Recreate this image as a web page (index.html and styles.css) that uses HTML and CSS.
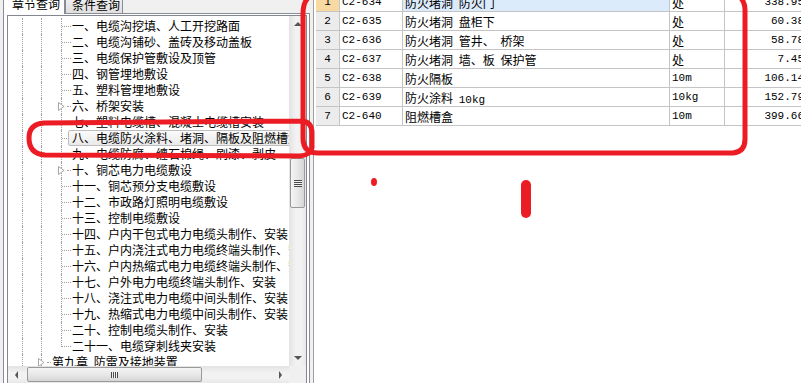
FILE: index.html
```html
<!DOCTYPE html>
<html lang="zh-CN">
<head>
    <meta charset="UTF-8">
    <title>章节查询</title>
    <link rel="stylesheet" href="styles.css">
</head>
<body>
    <div class="app">
        <div class="left">
            <div class="tabs">
                <div class="tab on">章节查询</div>
                <div class="tab">条件查询</div>
            </div>
            <div class="page">
                <div class="tree">
                    <div class="nodes">
                        <div class="row"><i class="g"></i><i class="g"></i><i class="c"></i><span class="t">一、电缆沟挖填、人工开挖路面</span></div>
                        <div class="row"><i class="g"></i><i class="g"></i><i class="c"></i><span class="t">二、电缆沟铺砂、盖砖及移动盖板</span></div>
                        <div class="row"><i class="g"></i><i class="g"></i><i class="c"></i><span class="t">三、电缆保护管敷设及顶管</span></div>
                        <div class="row"><i class="g"></i><i class="g"></i><i class="c"></i><span class="t">四、钢管埋地敷设</span></div>
                        <div class="row"><i class="g"></i><i class="g"></i><i class="c"></i><span class="t">五、塑料管埋地敷设</span></div>
                        <div class="row"><i class="g"></i><i class="g"></i><i class="c exp"><svg width="7" height="9" viewBox="0 0 7 9"><polygon points="0.5,0.5 6,4.5 0.5,8.5" fill="#fff" stroke="#a6a6a6"/></svg></i><span class="t">六、桥架安装</span></div>
                        <div class="row"><i class="g"></i><i class="g"></i><i class="c"></i><span class="t">七、塑料电缆槽、混凝土电缆槽安装</span></div>
                        <div class="row sel"><i class="g"></i><i class="g"></i><i class="c"></i><span class="t">八、电缆防火涂料、堵洞、隔板及阻燃槽盒安装</span></div>
                        <div class="row"><i class="g"></i><i class="g"></i><i class="c"></i><span class="t">九、电缆防腐、缠石棉绳、刷漆、剥皮</span></div>
                        <div class="row"><i class="g"></i><i class="g"></i><i class="c exp"><svg width="7" height="9" viewBox="0 0 7 9"><polygon points="0.5,0.5 6,4.5 0.5,8.5" fill="#fff" stroke="#a6a6a6"/></svg></i><span class="t">十、铜芯电力电缆敷设</span></div>
                        <div class="row"><i class="g"></i><i class="g"></i><i class="c"></i><span class="t">十一、铜芯预分支电缆敷设</span></div>
                        <div class="row"><i class="g"></i><i class="g"></i><i class="c"></i><span class="t">十二、市政路灯照明电缆敷设</span></div>
                        <div class="row"><i class="g"></i><i class="g"></i><i class="c"></i><span class="t">十三、控制电缆敷设</span></div>
                        <div class="row"><i class="g"></i><i class="g"></i><i class="c"></i><span class="t">十四、户内干包式电力电缆头制作、安装</span></div>
                        <div class="row"><i class="g"></i><i class="g"></i><i class="c"></i><span class="t">十五、户内浇注式电力电缆终端头制作、安装</span></div>
                        <div class="row"><i class="g"></i><i class="g"></i><i class="c"></i><span class="t">十六、户内热缩式电力电缆终端头制作、安装</span></div>
                        <div class="row"><i class="g"></i><i class="g"></i><i class="c"></i><span class="t">十七、户外电力电缆终端头制作、安装</span></div>
                        <div class="row"><i class="g"></i><i class="g"></i><i class="c"></i><span class="t">十八、浇注式电力电缆中间头制作、安装</span></div>
                        <div class="row"><i class="g"></i><i class="g"></i><i class="c"></i><span class="t">十九、热缩式电力电缆中间头制作、安装</span></div>
                        <div class="row"><i class="g"></i><i class="g"></i><i class="c"></i><span class="t">二十、控制电缆头制作、安装</span></div>
                        <div class="row"><i class="g"></i><i class="g"></i><i class="c last"></i><span class="t">二十一、电缆穿刺线夹安装</span></div>
                        <div class="row"><i class="g"></i><i class="c exp"><svg width="7" height="9" viewBox="0 0 7 9"><polygon points="0.5,0.5 6,4.5 0.5,8.5" fill="#fff" stroke="#a6a6a6"/></svg></i><span class="t">第九章 防雷及接地装置</span></div>
                    </div>
                    <div class="vbar">
                        <span class="btn"><i class="arr up"></i></span>
                        <span class="vthumb"><i class="grip"></i></span>
                        <span class="btn end"><i class="arr down"></i></span>
                    </div>
                    <div class="hbar">
                        <span class="btn"><i class="arr lt"></i></span>
                        <span class="hthumb"><i class="grip"></i></span>
                        <span class="btn end"><i class="arr rt"></i></span>
                    </div>
                    <div class="corner"></div>
                </div>
            </div>
        </div>

        <div class="right">
            <div class="grid">
                <div class="rn cur">1</div><div class="mono">C2-634</div><div class="name cur">防火堵洞 防火门</div><div>处</div><div class="price">338.95</div>
                <div class="rn">2</div><div class="mono">C2-635</div><div class="name">防火堵洞 盘柜下</div><div>处</div><div class="price">60.38</div>
                <div class="rn">3</div><div class="mono">C2-636</div><div class="name">防火堵洞 管井、 桥架</div><div>处</div><div class="price">58.78</div>
                <div class="rn">4</div><div class="mono">C2-637</div><div class="name">防火堵洞 墙、板 保护管</div><div>处</div><div class="price">7.45</div>
                <div class="rn">5</div><div class="mono">C2-638</div><div class="name">防火隔板</div><div class="mono">10m</div><div class="price">106.14</div>
                <div class="rn">6</div><div class="mono">C2-639</div><div class="name"><span>防火涂料 <span class="mono">10kg</span></span></div><div class="mono">10kg</div><div class="price">152.79</div>
                <div class="rn">7</div><div class="mono">C2-640</div><div class="name">阻燃槽盒</div><div class="mono">10m</div><div class="price">399.66</div>
            </div>
        </div>

        <!-- red pen marks drawn over the screenshot -->
        <svg class="marks" width="801" height="383" viewBox="0 0 801 383">
            <g fill="none" stroke="#ec1c24" stroke-width="5" stroke-linecap="round" stroke-linejoin="round">
                <path d="M309 -3 Q303 2 303 14 L303 138 Q303 153 318 153 L733 153 Q745 152 745 139 L745 10 Q745 2 740 -3"/>
                <path d="M302 121 L44 123 Q29 124 29 138 Q29 154 45 155 L300 156 Q311 155 312 148 L312 133 Q312 122 302 121"/>
            </g>
            <ellipse cx="374" cy="182" rx="3" ry="4" fill="#ec1c24"/>
            <rect x="521" y="180" width="10" height="38" rx="5" fill="#ec1c24"/>
        </svg>
    </div>
</body>
</html>
```

FILE: styles.css
```css
* {
    box-sizing: border-box;
}

body {
    margin: 0;
    width: 801px;
    height: 383px;
    overflow: hidden;
    background-color: #f0f0f0;
    font-family: 'Noto Sans CJK SC', sans-serif;
    font-size: 12px;
    word-spacing: 3px;
    color: #000;
}

.app {
    position: relative;
    display: flex;
    height: 383px;
}

/* left side: tab control with the chapter tree */

.left {
    width: 313px;
    padding-left: 3px;
    background-color: #f0f0f0;
}

.tabs {
    display: flex;
    align-items: flex-end;
    height: 13px;
}

.tab {
    display: flex;
    align-items: center;
    height: 19px;
    padding: 0 2px 0 6px;
    border: 1px solid #898c95;
    border-bottom: none;
    background: linear-gradient(#f2f2f2, #e0e0e0);
    white-space: nowrap;
}

.tab.on {
    position: relative;
    height: 22px;
    margin-bottom: -1px;
    padding: 0 4px 0 8px;
    background: #fff;
}

.page {
    width: 307px;
    height: 370px;
    padding: 1px 2px 0 3px;
    border: 1px solid #898c95;
    border-bottom: none;
    background: #fff;
}

.tree {
    display: grid;
    grid-template-columns: 281px 17px;
    grid-template-rows: 350px 17px;
    width: 300px;
    height: 369px;
    border: 1px solid #828790;
}

.nodes {
    overflow: hidden;
    padding-top: 2px;
}

.row {
    display: flex;
    height: 16px;
    padding-left: 14px;
    white-space: nowrap;
}

.g {
    flex: none;
    width: 19px;
    border-left: 1px dotted #a0a0a0;
}

.g + .g {
    width: 20px;
}

.c {
    flex: none;
    display: flex;
    align-items: center;
    width: 10px;
    border-left: 1px dotted #a0a0a0;
}

.c::after {
    content: "";
    flex: 1;
    border-top: 1px dotted #a0a0a0;
}

.c.last {
    align-self: flex-start;
    align-items: flex-end;
    height: 9px;
}

.c.exp svg {
    flex: none;
    margin-left: -4px;
}

.c.exp::after {
    margin-left: 2px;
}

.t {
    flex: none;
    height: 16px;
    line-height: 14px;
    padding-right: 2px;
    border: 1px solid transparent;
}

.sel .t {
    margin-left: -3px;
    padding-left: 3px;
    border-color: #bdbdbd;
    border-radius: 2px;
    background: linear-gradient(#fbfbfb, #e9e9e9);
}

/* scrollbars */

.vbar {
    display: flex;
    flex-direction: column;
    background: linear-gradient(to right, #e3e3e3, #f2f2f2 40%, #f2f2f2 70%, #e8e8e8);
}

.hbar {
    display: flex;
    background: linear-gradient(#e3e3e3, #f2f2f2 40%, #f2f2f2 70%, #e8e8e8);
}

.corner {
    background: #f0f0f0;
}

.btn {
    display: flex;
    align-items: center;
    justify-content: center;
    flex: none;
    width: 17px;
    height: 17px;
}

.btn.end {
    margin-top: auto;
}

.hbar .btn.end {
    margin-top: 0;
    margin-left: auto;
}

.arr {
    width: 0;
    height: 0;
    border: 4px solid transparent;
}

.arr.up {
    border-top: none;
    border-bottom-color: #555;
    margin-top: -2px;
}

.arr.down {
    border-bottom: none;
    border-top-color: #555;
}

.arr.lt {
    border-left: none;
    border-right-color: #555;
    border-width: 4px 3px;
}

.arr.rt {
    border-right: none;
    border-left-color: #555;
    border-width: 4px 3px;
}

.vthumb {
    display: flex;
    align-items: center;
    justify-content: center;
    width: 15px;
    height: 50px;
    margin: 125px 1px 0;
    border: 1px solid #9a9a9a;
    border-radius: 2px;
    background: linear-gradient(to right, #f4f4f4, #e8e8e8 50%, #d6d6d6);
}

.vthumb .grip {
    width: 8px;
    height: 7px;
    background: repeating-linear-gradient(#4a4a4a 0 1px, #f2f2f2 1px 2px);
}

.hthumb {
    display: flex;
    align-items: center;
    justify-content: center;
    width: 175px;
    height: 15px;
    margin: 1px 0 0 2px;
    border: 1px solid #9a9a9a;
    border-radius: 2px;
    background: linear-gradient(#f4f4f4, #e8e8e8 50%, #d6d6d6);
}

.hthumb .grip {
    width: 7px;
    height: 6px;
    background: repeating-linear-gradient(to right, #4a4a4a 0 1px, #f2f2f2 1px 2px);
}

/* right side: quota table */

.right {
    flex: 1;
    overflow: hidden;
    padding-left: 2px;
    border-left: 1px solid #a0a0a0;
    background: #fff;
}

.grid {
    display: grid;
    grid-template-columns: 24px 63px 267px 55px 90px;
    grid-auto-rows: 19px;
    width: 499px;
    margin-top: -7px;
}

.grid > div {
    display: flex;
    align-items: center;
    padding-left: 2px;
    border-right: 1px solid #c4c4c4;
    border-bottom: 1px solid #c4c4c4;
    white-space: nowrap;
    overflow: hidden;
}

.mono,
.grid .rn,
.grid .price {
    font-family: 'Liberation Mono', monospace;
    font-size: 11px;
    word-spacing: 0;
}

.grid .rn {
    justify-content: center;
    padding: 0;
    background: #ececec;
}

.grid .rn.cur {
    background: #f9d9a2;
}

.grid .name.cur {
    background: #dcebfc;
}

.grid .price {
    justify-content: flex-end;
    padding-right: 10px;
}

.marks {
    position: absolute;
    top: 0;
    left: 0;
    pointer-events: none;
}
```
